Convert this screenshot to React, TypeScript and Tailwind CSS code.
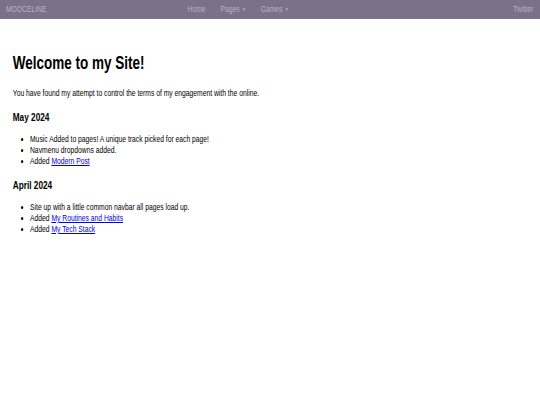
const font = { fontFamily: '"Liberation Sans", Arial, sans-serif' };

function Caret() {
  return <span className="ml-[3px] text-[5px] align-middle">▼</span>;
}

function NewLink({ children }: { children: string }) {
  return <a className="text-[#0000ee] underline">{children}</a>;
}

export default function App() {
  return (
    <div className="min-h-[405px] w-[540px] overflow-hidden bg-white text-black" style={font}>
      {/* the page is drawn narrow, so everything inside is squeezed sideways */}
      <div className="w-[720px] origin-top-left scale-x-[0.75]">
        <nav className="flex h-[19px] items-center bg-[#7d7089] pl-[8px] pr-[9px] text-[9px] text-[#b9b1c2]">
          <span>MOOCELINE</span>
          <div className="ml-[188px] flex gap-[20px]">
            <a>Home</a>
            <a>
              Pages
              <Caret />
            </a>
            <a>
              Games
              <Caret />
            </a>
          </div>
          <a className="ml-auto">Twitter</a>
        </nav>
        <main className="px-[17px]">
          <h1 className="mt-[33px] text-[18px] font-bold leading-[22px]">Welcome to my Site!</h1>
          <p className="mt-[14px] text-[9px] leading-[11px]">
            You have found my attempt to control the terms of my engagement with the online.
          </p>
          <h3 className="mt-[12px] text-[11px] font-bold leading-[13px]">May 2024</h3>
          <ul className="mt-[10px] list-disc pl-[23px] text-[9px] leading-[11px]">
            <li>Music Added to pages! A unique track picked for each page!</li>
            <li>Navmenu dropdowns added.</li>
            <li>
              Added <NewLink>Modern Post</NewLink>
            </li>
          </ul>
          <h3 className="mt-[12px] text-[11px] font-bold leading-[13px]">April 2024</h3>
          <ul className="mt-[10px] list-disc pl-[23px] text-[9px] leading-[11px]">
            <li>Site up with a little common navbar all pages load up.</li>
            <li>
              Added <NewLink>My Routines and Habits</NewLink>
            </li>
            <li>
              Added <NewLink>My Tech Stack</NewLink>
            </li>
          </ul>
        </main>
      </div>
    </div>
  );
}
